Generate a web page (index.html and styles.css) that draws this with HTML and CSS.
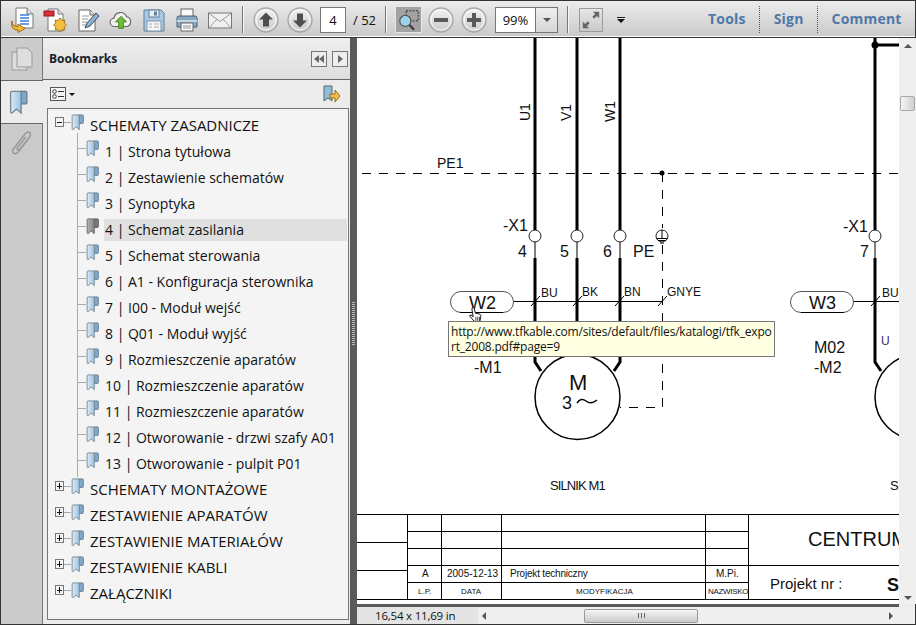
FILE: index.html
```html
<!DOCTYPE html>
<html lang="pl">
<head>
<meta charset="utf-8">
<title>Adobe Reader</title>
<link rel="stylesheet" href="styles.css">
</head>
<body>
<svg class="defs" width="0" height="0" aria-hidden="true">
  <defs>
    <linearGradient id="rib" x1="0" y1="0" x2="1" y2="0"><stop offset="0" stop-color="#dcebf7"/><stop offset="1" stop-color="#9cc3e2"/></linearGradient>
    <linearGradient id="ribg" x1="0" y1="0" x2="1" y2="0"><stop offset="0" stop-color="#b5b5b5"/><stop offset="1" stop-color="#858585"/></linearGradient>
    <linearGradient id="btn" x1="0" y1="0" x2="0" y2="1"><stop offset="0" stop-color="#f4f4f4"/><stop offset="1" stop-color="#c8c8c8"/></linearGradient>
    <symbol id="bm" viewBox="0 0 14 19">
      <path d="M9 1h3.500q1 0 1 1v7.500q0 1-1 1H9z" fill="#7ea9ca" stroke="#66788a"/>
      <path d="M2 1h7v16.500l-3.500-3-3.500 3q-1 0-1-1V2q0-1 1-1z" fill="url(#rib)" stroke="#76868f"/>
    </symbol>
    <symbol id="bmg" viewBox="0 0 14 19">
      <path d="M9 1h3.500q1 0 1 1v7.500q0 1-1 1H9z" fill="#777" stroke="#555"/>
      <path d="M2 1h7v16.500l-3.500-3-3.500 3q-1 0-1-1V2q0-1 1-1z" fill="url(#ribg)" stroke="#666"/>
    </symbol>
    <symbol id="circ" viewBox="0 0 26 26">
      <circle cx="13" cy="13" r="12" fill="url(#btn)" stroke="#a8a8a8" stroke-width="1.300"/>
      <circle cx="13" cy="13" r="10" fill="none" stroke="#fafafa"/>
    </symbol>
  </defs>
</svg>

<div class="app">
  <header class="toolbar">
    <div class="tool-group">
      <span class="tool"><svg class="ico" viewBox="0 0 24 26"><path d="M6 1h11l6 6v14H6z" fill="#fff" stroke="#777"/><path d="M17 1v6h6" fill="#ddd" stroke="#777"/><path d="M10 8h9M10 11h9M10 14h9M10 17h9" stroke="#3b7fd0" stroke-width="1.400"/><path d="M2 14q-1 5 6 5.500V17l7 4.500-7 4V23Q0 23 2 14z" fill="#f4b93a" stroke="#9a6a15"/></svg></span>
      <span class="tool"><svg class="ico" viewBox="0 0 24 26"><path d="M5 2h10l5 5v17H5z" fill="#fff" stroke="#777"/><path d="M15 2v5h5" fill="#ddd" stroke="#777"/><rect x="1" y="4" width="10" height="5" fill="#e02c35" stroke="#8d1b20"/><path d="M17 11l1.800 2.500 3-.5-.6 3 2.300 2-2.300 2 .6 3-3-.5-1.800 2.500-1.800-2.500-3 .5.600-3-2.300-2 2.300-2-.6-3 3 .5z" fill="#f2bf3e" stroke="#a97b1b"/></svg></span>
      <span class="tool"><svg class="ico" viewBox="0 0 24 26"><path d="M3 3h11l5 5v16H3z" fill="#fff" stroke="#666"/><path d="M14 3v5h5" fill="#ddd" stroke="#666"/><path d="M6 9h7M6 12h6M6 15h5M6 18h4" stroke="#999"/><path d="M9 21l2-5L20 6l3 3-9 10z" fill="#8ab4d6" stroke="#445"/></svg></span>
      <span class="tool"><svg class="ico" viewBox="0 0 26 26"><path d="M6 20a4.500 4.500 0 0 1-.5-9 7 7 0 0 1 13.500-1.500A5.500 5.500 0 0 1 20 20z" fill="#f2f2f2" stroke="#666" stroke-width="1.200"/><path d="M13 9l6 6h-3.500v7h-5v-7H7z" fill="#6fc038" stroke="#3f7d1c"/></svg></span>
      <span class="tool"><svg class="ico" viewBox="0 0 24 26"><path d="M2 3h17l3 3v18H2z" fill="#a9c8e4" stroke="#5f7f9c"/><rect x="7" y="3" width="10" height="7" fill="#e6eef5" stroke="#5f7f9c"/><rect x="12" y="4.500" width="3" height="4" fill="#5f7f9c"/><rect x="5" y="14" width="14" height="10" fill="#f6f6f6" stroke="#7f97ac"/><path d="M7 17h3M12 17h5M7 20h3M12 20h5" stroke="#aaa"/></svg></span>
      <span class="tool"><svg class="ico" viewBox="0 0 24 26"><rect x="6" y="2" width="12" height="9" fill="#fafafa" stroke="#666"/><path d="M2 11q0-2 2-2h16q2 0 2 2v9H2z" fill="#8aa9c4" stroke="#4b6072"/><rect x="2" y="13" width="20" height="2" fill="#c5d6e4"/><rect x="6" y="16" width="12" height="8" fill="#fafafa" stroke="#666"/><path d="M8 19h8M8 21h8" stroke="#999"/></svg></span>
      <span class="tool"><svg class="ico" viewBox="0 0 24 26"><rect x="0.500" y="6" width="23" height="15" fill="#f1f1f1" stroke="#777"/><path d="M1 6.500l11 8 11-8M1 21l8-9M23 21l-8-9" fill="none" stroke="#999"/></svg></span>
    </div>
    <span class="sep sep-a"></span>
    <span class="round"><svg class="rnd" viewBox="0 0 26 26"><use href="#circ"/><path d="M13 5.500l7 7h-4v7h-6v-7H6z" fill="#4f4f4f"/></svg></span>
    <span class="round"><svg class="rnd" viewBox="0 0 26 26"><use href="#circ"/><path d="M13 20.500l7-7h-4v-7h-6v7H6z" fill="#4f4f4f"/></svg></span>
    <span class="field page-field">4</span>
    <span class="pages">/ 52</span>
    <span class="sep sep-b"></span>
    <span class="select-tool"><svg class="sel" viewBox="0 0 26 26"><rect x="10" y="3" width="13" height="11" fill="none" stroke="#222" stroke-dasharray="2 1.500"/><circle cx="9" cy="14" r="6" fill="#9fd3ea" stroke="#555" stroke-width="1.300"/><path d="M13.500 18.500l5 5" stroke="#333" stroke-width="2.200"/></svg></span>
    <span class="round zoom-out"><svg class="rnd" viewBox="0 0 26 26"><use href="#circ"/><rect x="6" y="11" width="14" height="4" fill="#5a5a5a"/></svg></span>
    <span class="round"><svg class="rnd" viewBox="0 0 26 26"><use href="#circ"/><path d="M11 6h4v5h5v4h-5v5h-4v-5H6v-4h5z" fill="#5a5a5a"/></svg></span>
    <span class="zoom-box"><span class="zoom-val">99%</span><span class="zoom-drop"><i class="tri"></i></span></span>
    <span class="sep sep-c"></span>
    <span class="full"><svg class="fullico" viewBox="0 0 22 22"><path d="M13 2h7v7l-2.500-2.500-3 3-2-2 3-3zM9 20H2v-7l2.500 2.500 3-3 2 2-3 3z" fill="#666"/></svg></span>
    <span class="more"><i class="more-bar"></i><i class="tri dark"></i></span>
    <nav class="links">
      <span class="link">Tools</span><i class="dots"></i><span class="link">Sign</span><i class="dots"></i><span class="link">Comment</span>
    </nav>
  </header>

  <div class="main">
    <aside class="rail">
      <div class="rail-tab">
        <svg class="rail-ico" viewBox="0 0 22 24"><rect x="1" y="5" width="15" height="18" fill="#dcdcdc" stroke="#999"/><path d="M6 1h10l5 5v14H6z" fill="#dedede" stroke="#999"/></svg>
      </div>
      <div class="rail-tab active">
        <svg class="rail-ribbon" viewBox="0 0 14 19"><use href="#bm"/></svg>
      </div>
      <div class="rail-tab plain">
        <svg class="rail-clip" viewBox="0 0 22 28"><path d="M18 8L8 21q-3 4-5.500 2T4 17L14 4q2.500-3 4.500-1.500T18 8L9 19q-1.500 1.500-2.500.5T7 17l8-10" fill="none" stroke="#9a9a9a" stroke-width="1.600"/></svg>
      </div>
    </aside>

    <section class="panel">
      <div class="panel-head">
        <span class="panel-title">Bookmarks</span>
        <span class="mini"><i class="l"></i><i class="l"></i></span>
        <span class="mini"><i class="r"></i></span>
      </div>
      <div class="panel-tools">
        <span class="opt"><svg class="opt-ico" viewBox="0 0 16 16"><rect x="0.500" y="1.500" width="15" height="13" fill="#f4f4f4" stroke="#555"/><circle cx="4.500" cy="5.500" r="1.800" fill="#fff" stroke="#333"/><circle cx="4.500" cy="10.500" r="1.800" fill="#fff" stroke="#333"/><path d="M8 5.500h6M8 10.500h6" stroke="#333"/></svg><i class="tri dark small"></i></span>
        <svg class="find-ico" viewBox="0 0 18 18"><path d="M2 1h8v15l-4-3-4 3z" fill="#8fbbdc" stroke="#566"/><path d="M8 9h5V5l5 6-5 6v-4H8z" fill="#f2bd45" stroke="#97701b"/></svg>
      </div>
      <div class="tree">
        <div class="row top"><i class="box minus"></i><i class="conn"></i><svg class="bm"><use href="#bm"/></svg><span class="label">SCHEMATY ZASADNICZE</span></div>
        <div class="children">
          <div class="row"><i class="conn"></i><svg class="bm"><use href="#bm"/></svg><span class="label">1 | Strona tytułowa</span></div>
          <div class="row"><i class="conn"></i><svg class="bm"><use href="#bm"/></svg><span class="label">2 | Zestawienie schematów</span></div>
          <div class="row"><i class="conn"></i><svg class="bm"><use href="#bm"/></svg><span class="label">3 | Synoptyka</span></div>
          <div class="row"><i class="conn"></i><svg class="bm"><use href="#bmg"/></svg><span class="label selected">4 | Schemat zasilania</span></div>
          <div class="row"><i class="conn"></i><svg class="bm"><use href="#bm"/></svg><span class="label">5 | Schemat sterowania</span></div>
          <div class="row"><i class="conn"></i><svg class="bm"><use href="#bm"/></svg><span class="label">6 | A1 - Konfiguracja sterownika</span></div>
          <div class="row"><i class="conn"></i><svg class="bm"><use href="#bm"/></svg><span class="label">7 | I00 - Moduł wejść</span></div>
          <div class="row"><i class="conn"></i><svg class="bm"><use href="#bm"/></svg><span class="label">8 | Q01 - Moduł wyjść</span></div>
          <div class="row"><i class="conn"></i><svg class="bm"><use href="#bm"/></svg><span class="label">9 | Rozmieszczenie aparatów</span></div>
          <div class="row"><i class="conn"></i><svg class="bm"><use href="#bm"/></svg><span class="label">10 | Rozmieszczenie aparatów</span></div>
          <div class="row"><i class="conn"></i><svg class="bm"><use href="#bm"/></svg><span class="label">11 | Rozmieszczenie aparatów</span></div>
          <div class="row"><i class="conn"></i><svg class="bm"><use href="#bm"/></svg><span class="label">12 | Otworowanie - drzwi szafy A01</span></div>
          <div class="row last"><i class="conn"></i><svg class="bm"><use href="#bm"/></svg><span class="label">13 | Otworowanie - pulpit P01</span></div>
        </div>
        <div class="row top"><i class="box plus"></i><i class="conn"></i><svg class="bm"><use href="#bm"/></svg><span class="label">SCHEMATY MONTAŻOWE</span></div>
        <div class="row top"><i class="box plus"></i><i class="conn"></i><svg class="bm"><use href="#bm"/></svg><span class="label">ZESTAWIENIE APARATÓW</span></div>
        <div class="row top"><i class="box plus"></i><i class="conn"></i><svg class="bm"><use href="#bm"/></svg><span class="label">ZESTAWIENIE MATERIAŁÓW</span></div>
        <div class="row top"><i class="box plus"></i><i class="conn"></i><svg class="bm"><use href="#bm"/></svg><span class="label">ZESTAWIENIE KABLI</span></div>
        <div class="row top"><i class="box plus"></i><i class="conn"></i><svg class="bm"><use href="#bm"/></svg><span class="label">ZAŁĄCZNIKI</span></div>
      </div>
    </section>

    <div class="splitter"><i class="grip"></i></div>

    <section class="viewer">
      <div class="view-top">
        <div class="doc">
          <svg class="sheet" viewBox="357 38 542 566">
            <g class="thick">
              <path d="M535 38V230M577 38V230M620 38V230M875 38V230"/>
              <path d="M535 258V362l6 9M577 258V355M620 258V362l-6 9M875 258V362l6 9"/>
              <path d="M875 45H899"/>
            </g>
            <circle cx="875" cy="45" r="3.500" class="dot"/>
            <g class="thin">
              <path d="M535 230V243M577 230V243M620 230V243M875 230V243M535 243V258M577 243V258M620 243V258M875 243V258"/>
              <path d="M513 301.500H662M853 301.500H899"/>
              <path d="M531 306l9-10M573 306l9-10M615 306l9-10M658 306l9-10M871 306l9-10"/>
              <rect x="450.500" y="291.500" width="63" height="21" rx="10.500" class="pill"/>
              <rect x="790.500" y="291.500" width="63" height="21" rx="10.500" class="pill"/>
              <path d="M460 312.500H503M801 312.500H844"/>
              <circle cx="535" cy="236" r="6" class="node"/>
              <circle cx="577" cy="236" r="6" class="node"/>
              <circle cx="620" cy="236" r="6" class="node"/>
              <circle cx="875" cy="236" r="6" class="node"/>
              <circle cx="662" cy="236" r="6" class="node"/>
              <path d="M662 230V238M656.500 238.500H667.500M658 240.500H666M660 243H664"/>
              <circle cx="577.500" cy="397" r="42.500" class="motor"/>
              <circle cx="917.500" cy="397" r="42.500" class="motor"/>
              <path d="M577 403q4-6 9-2t11-1" class="motor-line"/>
            </g>
            <g class="dashed">
              <path d="M362 173.500H899"/>
              <path d="M662.500 173V228M662.500 245V407.500H620"/>
            </g>
            <circle cx="662" cy="173" r="2.500" class="dot"/>

            <text class="t14 rot" transform="translate(530 121) rotate(-90)">U1</text>
            <text class="t14 rot" transform="translate(571 121) rotate(-90)">V1</text>
            <text class="t14 rot" transform="translate(615 122) rotate(-90)">W1</text>
            <text class="t14" x="437" y="168">PE1</text>
            <text class="t16" x="503" y="231">-X1</text>
            <text class="t16" x="518" y="257">4</text>
            <text class="t16" x="560" y="257">5</text>
            <text class="t16" x="603" y="257">6</text>
            <text class="t16" x="633" y="257">PE</text>
            <text class="t12" x="541" y="297">BU</text>
            <text class="t12" x="582" y="296">BK</text>
            <text class="t12" x="624" y="296">BN</text>
            <text class="t12 thinfont" x="667" y="296">GNYE</text>
            <text class="t18" x="469" y="309">W2</text>
            <text class="t18" x="809" y="309">W3</text>
            <text class="t16" x="843" y="232">-X1</text>
            <text class="t16" x="860" y="257">7</text>
            <text class="t12" x="882" y="297">BU</text>
            <text class="t12 u" x="881" y="345">U</text>
            <text class="t16" x="814" y="353">M02</text>
            <text class="t16" x="474" y="373">-M1</text>
            <text class="t16" x="814" y="373">-M2</text>
            <text class="t22" x="569" y="390">M</text>
            <text class="t18" x="562" y="409">3</text>
            <text class="t13 narrow" x="550" y="490">SILNIK M1</text>
            <text class="t13 narrow" x="890" y="490">S</text>

            <g class="grid">
              <path d="M356 514.500H899M407.500 531.500H748M407.500 548.500H748M407.500 565.500H899M407.500 582.500H748M356 599.500H899"/>
              <path d="M356 542.500H407M356 570.500H407"/>
              <path d="M407.500 514V599M441.500 514V599M501.500 514V599M705.500 514V599M748.500 514V599"/>
            </g>
            <text class="t10" x="422" y="577">A</text>
            <text class="t10" x="447" y="577">2005-12-13</text>
            <text class="t10 squeeze" x="510" y="577">Projekt techniczny</text>
            <text class="t10" x="716" y="577">M.Pi.</text>
            <text class="t8" x="418" y="594">L.P.</text>
            <text class="t8" x="461" y="594">DATA</text>
            <text class="t8" x="576" y="594">MODYFIKACJA</text>
            <text class="t8 tight" x="708" y="594">NAZWISKO</text>
            <text class="t20" x="808" y="546">CENTRUM</text>
            <text class="t15" x="770" y="589">Projekt nr :</text>
            <text class="t18 bold" x="887" y="591">S</text>
          </svg>
          <svg class="hand" viewBox="0 0 16 18"><path d="M5 1q1.500-1 2 .5L8.500 7l5 1q1.500 1 1 3l-1 5H7L2 10q0-1.500 1.500-1L6 11 4.500 2.500z" fill="#fff" stroke="#000"/><path d="M9 11v4M11 11v4M13 11v4" stroke="#000" stroke-width=".8"/></svg>
          <div class="tooltip">http://www.tfkable.com/sites/default/files/katalogi/tfk_expo<br>rt_2008.pdf#page=9</div>
        </div>
        <div class="vscroll">
          <i class="arrow up"></i>
          <span class="vtrack"><i class="vthumb"></i></span>
          <i class="arrow down"></i>
        </div>
      </div>
      <div class="dark-band"></div>
      <footer class="status">
        <span class="size">16,54 x 11,69 in</span>
        <div class="hscroll">
          <i class="arrow left"></i>
          <span class="htrack"><span class="hthumb"><i class="hgrip"></i></span></span>
          <i class="arrow right"></i>
        </div>
      </footer>
    </section>
  </div>
</div>
</body>
</html>
```

FILE: styles.css
```css
* { box-sizing: border-box; }
html, body { margin: 0; padding: 0; height: 100%; overflow: hidden; }
body { font-family: "Open Sans", "Noto Sans", sans-serif; color: #111; background: #fff; }
i { display: block; font-style: normal; }
.defs { display: block; height: 0; width: 0; }
.app { width: 916px; height: 625px; display: flex; flex-direction: column; border-left: 1px solid #333; border-right: 1px solid #333; border-bottom: 1px solid #333; }

/* toolbar */
.toolbar { height: 38px; flex: none; display: flex; align-items: center; padding: 1px 0 0 4px; border-top: 1px solid #333; border-bottom: 1px solid #333; box-shadow: inset 0 -1px 0 #fff; background: linear-gradient(#ececec, #c9c9c9); }
.tool-group { display: flex; }
.tool { width: 33px; height: 34px; display: flex; align-items: center; justify-content: center; }
.ico { width: 24px; height: 26px; display: block; }
.sep { width: 2px; height: 27px; background: linear-gradient(90deg, #777 50%, #f6f6f6 50%); flex: none; }
.sep-a { margin: 0 5px 0 6px; }
.sep-b { margin: 0 8px 0 8px; }
.sep-c { margin: 0 10px 0 9px; }
.round { width: 34px; height: 34px; display: flex; align-items: center; justify-content: center; flex: none; }
.rnd { width: 26px; height: 26px; }
.zoom-out { margin-left: 2px; margin-right: -1px; }
.field { background: #fff; border: 1px solid #777; font-size: 13px; display: flex; align-items: center; justify-content: center; }
.page-field { width: 26px; height: 26px; margin-left: 3px; }
.pages { font-size: 13px; margin-left: 7px; width: 24px; white-space: nowrap; }
.select-tool { width: 27px; height: 27px; background: #a2a2a2; border: 1px solid #e8e8e8; display: flex; align-items: center; justify-content: center; flex: none; }
.sel { width: 24px; height: 24px; }
.zoom-box { width: 63px; height: 26px; margin-left: 4px; display: flex; border: 1px solid #777; flex: none; }
.zoom-val { width: 40px; background: #fff; border-right: 1px solid #777; font-size: 13px; display: flex; align-items: center; justify-content: center; }
.zoom-drop { flex: 1; background: linear-gradient(#efefef, #d6d6d6); display: flex; align-items: center; justify-content: center; }
.tri { width: 0; height: 0; border-left: 4px solid transparent; border-right: 4px solid transparent; border-top: 4px solid #555; }
.tri.dark { border-top-color: #111; }
.tri.small { border-left-width: 3px; border-right-width: 3px; border-top-width: 3px; }
.full { width: 24px; height: 24px; border: 1px solid #9b9b9b; background: linear-gradient(#e6e6e6, #c9c9c9); display: flex; align-items: center; justify-content: center; flex: none; }
.fullico { width: 20px; height: 20px; }
.more { margin-left: 12px; width: 12px; display: flex; flex-direction: column; align-items: center; gap: 1px; }
.more-bar { width: 8px; height: 1px; background: #222; }
.links { margin-left: 81px; display: flex; align-items: center; gap: 14px; }
.link { font-size: 14px; font-weight: 700; color: #4f78a8; line-height: 20px; letter-spacing: .2px; margin-top: -2px; }
.dots { width: 1px; height: 28px; margin-left: -1px; background: repeating-linear-gradient(#555 0 1px, transparent 1px 2px); }

/* layout */
.main { flex: 1; display: flex; min-height: 0; }
.rail { width: 42px; flex: none; display: flex; flex-direction: column; background: #cbcbcb; border-right: 1px solid #777; }
.rail-tab { height: 42px; flex: none; display: flex; align-items: center; justify-content: center; }
.rail-tab.active { height: 44px; background: #ececec; border-top: 1px solid #666; border-bottom: 1px solid #666; margin-right: -1px; position: relative; justify-content: flex-start; padding-left: 8px; }
.rail-tab.plain { height: 40px; }
.rail-ico { width: 22px; height: 24px; }
.rail-ribbon { width: 19px; height: 25px; }
.rail-clip { width: 22px; height: 28px; }

.panel { width: 307px; flex: none; display: flex; flex-direction: column; background: #ececec; }
.panel-head { height: 42px; flex: none; display: flex; align-items: center; padding: 0 2px 0 6px; gap: 5px; background: linear-gradient(#efefef, #dedede); border-bottom: 1px solid #666; }
.panel-title { font-size: 12px; font-weight: 700; flex: 1; color: #16212c; }
.mini { width: 16px; height: 16px; border: 1px solid #777; display: flex; align-items: center; justify-content: center; gap: 0; background: #eee; }
.mini .l { width: 0; height: 0; border-top: 4px solid transparent; border-bottom: 4px solid transparent; border-right: 5px solid #666; }
.mini .r { width: 0; height: 0; border-top: 4px solid transparent; border-bottom: 4px solid transparent; border-left: 5px solid #666; }
.panel-tools { height: 28px; flex: none; display: flex; align-items: center; justify-content: space-between; padding: 0 10px 0 7px; }
.opt { display: flex; align-items: center; gap: 3px; }
.opt-ico { width: 16px; height: 16px; }
.find-ico { width: 18px; height: 18px; }
.tree { flex: 1; margin: 0 1px 4px 4px; border: 1px solid #777; background: #f4f4f4; padding-top: 4px; overflow: hidden; }
.row { height: 26px; display: flex; align-items: center; }
.row.top { padding-left: 7px; }
.row.last { margin-bottom: -17px; }
.box { width: 9px; height: 10px; margin-top: -8px; border: 1px solid #777; background-image: linear-gradient(#111, #111); background-size: 5px 1px; background-position: center; background-repeat: no-repeat; flex: none; }
.box.plus { background-image: linear-gradient(#111, #111), linear-gradient(#111, #111); background-size: 5px 1px, 1px 6px; background-position: center, center; background-repeat: no-repeat; }
.conn { width: 8px; height: 1px; margin-top: -8px; background: #aaa; flex: none; }
.row.top .conn { width: 7px; }
.bm { width: 13px; height: 17px; flex: none; margin-top: -8px; }
.label { font-size: 14px; line-height: 22px; height: 22px; margin-left: 5px; white-space: nowrap; flex: 1; padding-left: 1px; margin-right: 1px; color: #111; }
.row.top .label { margin-left: 6px; font-size: 15px; padding-left: 0; margin-top: -3px; }
.selected { background: #e0e0e0; }
.children { margin-left: 29px; border-left: 1px solid #aaa; margin-bottom: 17px; margin-top: -6px; padding-top: 6px; }

.splitter { width: 7px; flex: none; background: #5a5a5a; display: flex; align-items: center; justify-content: center; }
.grip { width: 3px; height: 44px; margin-top: -14px; background: repeating-linear-gradient(#bbb 0 1px, #5a5a5a 1px 2px); }

.viewer { flex: 1; min-width: 0; display: flex; flex-direction: column; background: #ececec; }
.view-top { flex: 1; display: flex; min-height: 0; }
.doc { width: 542px; height: 100%; background: #fff; position: relative; overflow: hidden; flex: none; }
.sheet { width: 542px; height: 566px; display: block; }
.vscroll { flex: 1; display: flex; flex-direction: column; align-items: center; background: #efefef; padding: 6px 0 4px; }
.vtrack { flex: 1; width: 100%; padding: 48px 1px 0; }
.vthumb { height: 15px; width: 15px; border: 1px solid #a9a9a9; border-radius: 2px; background: linear-gradient(90deg, #f5f5f5, #cfcfcf); }
.dark-band { height: 3px; width: 542px; background: #5a5a5a; flex: none; }
.arrow { width: 0; height: 0; flex: none; }
.arrow.up { border-left: 4px solid transparent; border-right: 4px solid transparent; border-bottom: 4px solid #555; }
.arrow.down { border-left: 4px solid transparent; border-right: 4px solid transparent; border-top: 4px solid #555; }
.arrow.left { border-top: 4px solid transparent; border-bottom: 4px solid transparent; border-right: 4px solid #555; }
.arrow.right { border-top: 4px solid transparent; border-bottom: 4px solid transparent; border-left: 4px solid #555; }
.status { height: 17px; flex: none; display: flex; align-items: center; background: #e4e4e4; }
.size { width: 121px; font-size: 11.5px; letter-spacing: -.2px; padding-left: 18px; white-space: nowrap; line-height: 17px; flex: none; }
.hscroll { flex: 1; height: 100%; display: flex; align-items: center; padding: 0 22px 0 4px; background: #efefef; }
.htrack { flex: 1; display: flex; padding-left: 98px; }
.hthumb { width: 114px; height: 14px; border: 1px solid #999; border-radius: 2px; background: linear-gradient(#f6f6f6, #c9c9c9); display: flex; align-items: center; justify-content: center; }
.hgrip { width: 7px; height: 5px; background: repeating-linear-gradient(90deg, #666 0 1px, transparent 1px 3px); }

/* drawing */
.thick path { fill: none; stroke: #000; stroke-width: 3; }
.thin path, .thin circle, .thin rect { fill: none; stroke: #000; stroke-width: 1; }
.thin .node { fill: #fff; stroke: #222; }
.thin .pill { fill: #fff; stroke: #555; }
.thin .motor { fill: #fff; stroke: #000; stroke-width: 1.500; }
.thin .motor-line { stroke-width: 1.500; }
.dashed path { fill: none; stroke: #000; stroke-width: 1; stroke-dasharray: 9 8; }
.dot { fill: #000; }
.grid path { fill: none; stroke: #000; stroke-width: 1; }
.sheet text { font-family: "Liberation Sans", Arial, sans-serif; fill: #111; }
.t8 { font-size: 8px; }
.tight { letter-spacing: -.3px; }
.squeeze { letter-spacing: -.2px; }
.t10 { font-size: 10px; }
.t12 { font-size: 12px; }
.t13 { font-size: 13px; }
.t14 { font-size: 14px; }
.t15 { font-size: 15px; }
.t16 { font-size: 16px; }
.t18 { font-size: 18px; }
.t20 { font-size: 20px; }
.t22 { font-size: 22px; }
.narrow { letter-spacing: -.9px; }
.bold { font-weight: 700; }
.sheet .u { fill: #3a2a70; }
.tooltip { position: absolute; left: 91px; top: 283px; width: 327px; height: 36px; background: #ffffe1; border: 1px solid #767676; font-size: 12px; letter-spacing: -.2px; line-height: 15px; padding: 2px 0 0 2px; white-space: nowrap; overflow: hidden; color: #111; }
.hand { position: absolute; left: 110px; top: 269px; width: 16px; height: 16px; }
```
